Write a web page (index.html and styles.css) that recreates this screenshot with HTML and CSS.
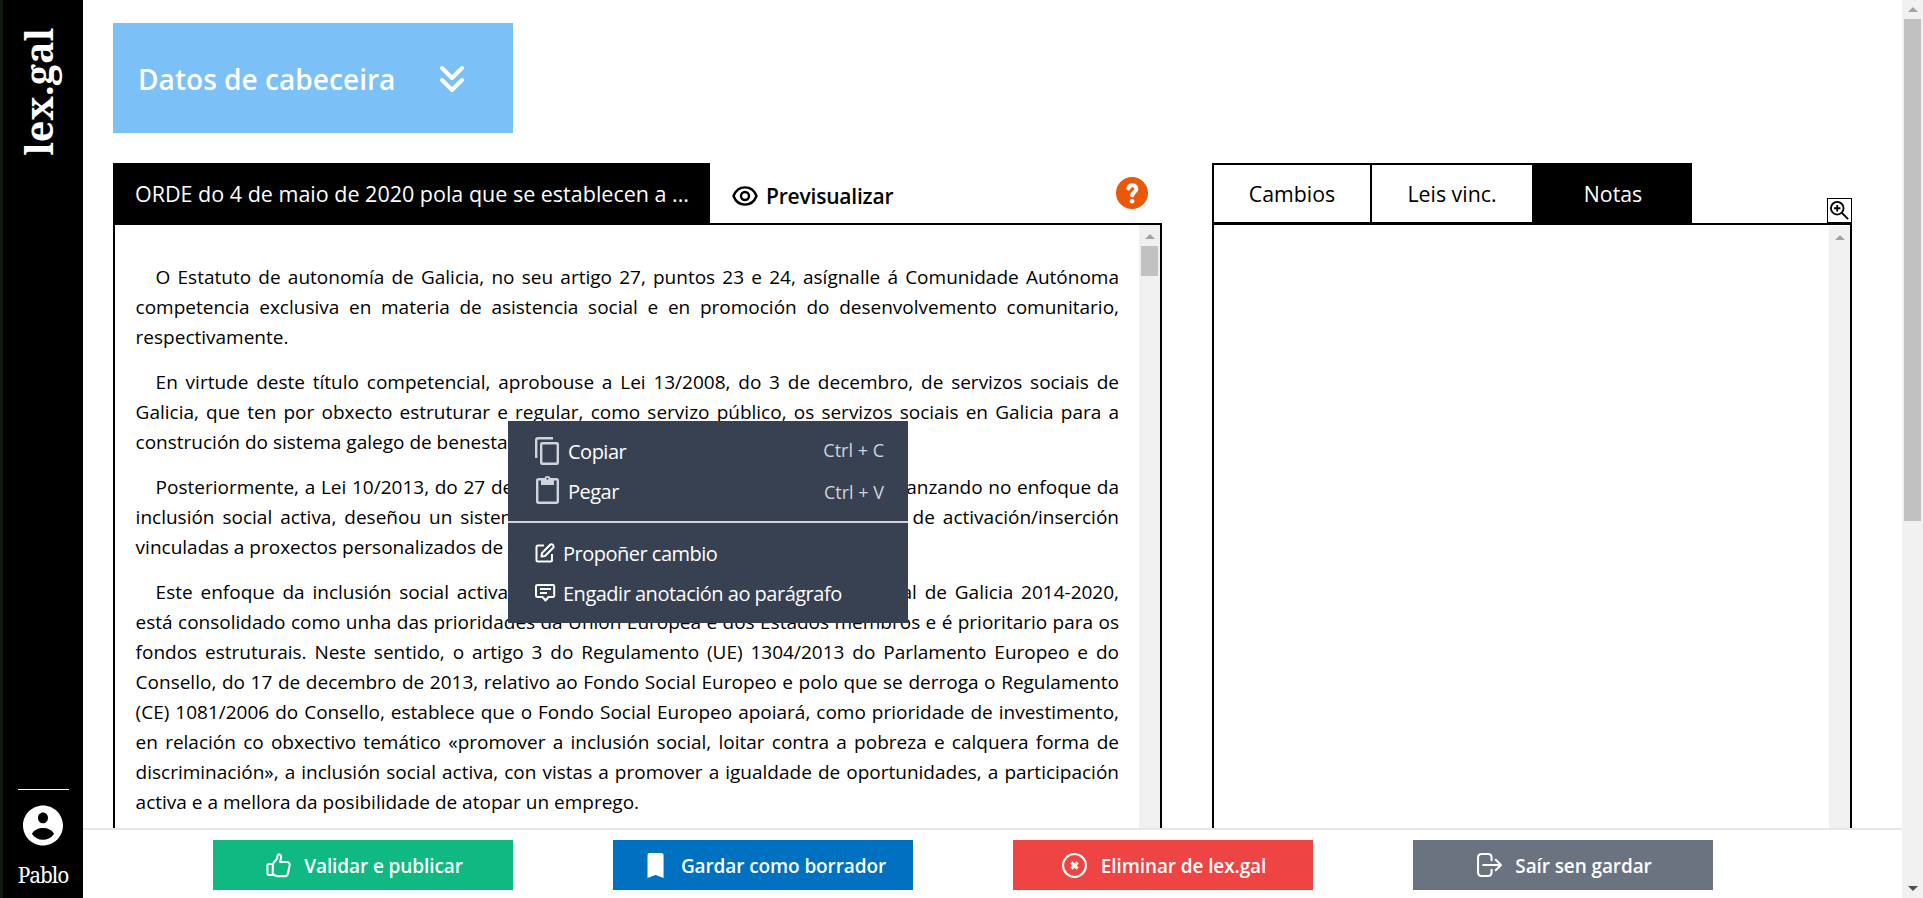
FILE: index.html
```
<!DOCTYPE html>
<html lang="gl">
<head>
<meta charset="utf-8">
<title>lex.gal</title>
<link rel="stylesheet" href="styles.css">
</head>
<body>
<div class="app">
  <aside class="side">
    <div class="logo">lex.gal</div>
    <div class="user">
      <svg class="avatar" viewBox="2 2 20 20"><path fill="#fff" d="M12 2C6.480 2 2 6.480 2 12s4.480 10 10 10 10-4.480 10-10S17.520 2 12 2zm0 3.500c1.400 0 2.500 1.200 2.500 2.700S13.400 10.900 12 10.900s-2.500-1.200-2.500-2.700S10.600 5.500 12 5.500zm0 13.600c-2.200 0-4.300-1-5.500-2.900.9-1.900 3.300-2.900 5.500-2.900s4.600 1 5.500 2.900c-1.200 1.900-3.300 2.900-5.500 2.900z"/></svg>
      <span class="name">Pablo</span>
    </div>
  </aside>
  <main class="main">
    <div class="content">
      <button class="header-data"><span class="header-label">Datos de cabeceira</span>
        <svg class="chev" viewBox="0 0 24 26" fill="none" stroke="#fff" stroke-width="4" stroke-linecap="round" stroke-linejoin="round"><path d="M2 2l10 10L22 2M2 14l10 10 10-10"/></svg>
      </button>
      <div class="columns">
        <section class="doc">
          <div class="tabs">
            <div class="doc-tab"><span class="doc-title">ORDE do 4 de maio de 2020 pola que se establecen a ...</span></div>
            <div class="preview">
              <svg class="eye" viewBox="0 0 26 20" fill="none" stroke="#000" stroke-width="2.400"><path d="M1.500 10C3.600 4.600 8 1.400 13 1.400S22.400 4.600 24.500 10C22.400 15.400 18 18.600 13 18.600S3.600 15.400 1.500 10z"/><circle cx="13" cy="10" r="4"/></svg>
              <span class="preview-label">Previsualizar</span>
            </div>
            <svg class="help" viewBox="0 0 32 32"><circle cx="16" cy="16" r="16" fill="#ea580c"/><path d="M12.300 11.400c.5-2 2-3.100 3.900-3.100 2.400 0 4.200 1.400 4.200 3.600 0 3.200-4.200 3.200-4.200 6.600" fill="none" stroke="#fff" stroke-width="4" stroke-linecap="round"/><circle cx="16.100" cy="24.200" r="2.300" fill="#fff"/></svg>
          </div>
          <div class="panel">
            <div class="text">
              <p><span class="l i">O Estatuto de autonomía de Galicia, no seu artigo 27, puntos 23 e 24, asígnalle á Comunidade Autónoma</span><span class="l">competencia exclusiva en materia de asistencia social e en promoción do desenvolvemento comunitario,</span><span class="l e">respectivamente.</span></p>
              <p><span class="l i">En virtude deste título competencial, aprobouse a Lei 13/2008, do 3 de decembro, de servizos sociais de</span><span class="l">Galicia, que ten por obxecto estruturar e regular, como servizo público, os servizos sociais en Galicia para a</span><span class="l e">construción do sistema galego de benestar.</span></p>
              <p><span class="l i">Posteriormente, a Lei 10/2013, do 27 de novembro, de inclusión social de Galicia, avanzando no enfoque da</span><span class="l">inclusión social activa, deseñou un sistema galego de prestacións sociais e medidas de activación/inserción</span><span class="l e">vinculadas a proxectos personalizados de cada persoa.</span></p>
              <p><span class="l i">Este enfoque da inclusión social activa, recollido nesa Estratexia de inclusión social de Galicia 2014-2020,</span><span class="l">está consolidado como unha das prioridades da Unión Europea e dos Estados membros e é prioritario para os</span><span class="l">fondos estruturais. Neste sentido, o artigo 3 do Regulamento (UE) 1304/2013 do Parlamento Europeo e do</span><span class="l">Consello, do 17 de decembro de 2013, relativo ao Fondo Social Europeo e polo que se derroga o Regulamento</span><span class="l">(CE) 1081/2006 do Consello, establece que o Fondo Social Europeo apoiará, como prioridade de investimento,</span><span class="l">en relación co obxectivo temático «promover a inclusión social, loitar contra a pobreza e calquera forma de</span><span class="l">discriminación», a inclusión social activa, con vistas a promover a igualdade de oportunidades, a participación</span><span class="l e">activa e a mellora da posibilidade de atopar un emprego.</span></p>
            </div>
            <div class="bar doc-bar"><i class="up"></i><i class="thumb"></i></div>
          </div>
        </section>
        <section class="notes">
          <div class="tabs">
            <div class="tab t1"><span>Cambios</span></div>
            <div class="tab t2"><span>Leis vinc.</span></div>
            <div class="tab t3"><span>Notas</span></div>
            <div class="zoom"><svg viewBox="1.500 1.500 21 21" fill="none" stroke="#000" stroke-width="2"><circle cx="9.500" cy="9.500" r="7"/><path d="M14.500 14.500l7 7M6 9.500h7M9.500 6v7"/></svg></div>
          </div>
          <div class="panel"><div class="bar notes-bar"><i class="up"></i></div></div>
        </section>
      </div>
    </div>
    <footer class="actions">
      <button class="btn green"><svg viewBox="0 0 24 24" fill="none" stroke="#fff" stroke-width="2" stroke-linejoin="round"><path d="M6.500 10.500l4-5c.4-1 .3-2.300.7-3.300.6-1.500 3.300-1 3.300 1.500 0 2-.7 3.200-1 5h6.500c1.800 0 3 1.300 2.700 3l-1.600 8c-.3 1.500-1.300 2.500-2.700 2.500h-7c-1.600 0-2.600-.5-4.900-2M6.500 10.500H3c-1 0-1.600.6-1.600 1.600v7.400c0 1 .6 1.600 1.600 1.600h3.500z"/></svg><span>Validar e publicar</span></button>
      <button class="btn blue"><svg viewBox="0 0 24 24"><path fill="#fff" d="M5.300 2q0-2 2-2h11.400q2 0 2 2v22L13 21l-7.700 3z"/></svg><span>Gardar como borrador</span></button>
      <button class="btn red"><svg viewBox="0 0 24 24" fill="none" stroke="#fff" stroke-width="2"><circle cx="12" cy="12" r="11"/><path stroke-width="3" d="M9 9l6 6m0-6l-6 6"/></svg><span>Eliminar de lex.gal</span></button>
      <button class="btn gray"><svg viewBox="0 0 24 24" fill="none" stroke="#fff" stroke-width="2" stroke-linecap="round" stroke-linejoin="round"><path d="M14 7V4.500q0-3.500-3.500-3.500h-6Q1 1 1 4.500v14Q1 22 4.500 22h6q3.500 0 3.500-3.500V16M6 11.500h17M18 6.500l5 5-5 5"/></svg><span>Saír sen gardar</span></button>
    </footer>
  </main>
  <div class="page-bar"><i class="up"></i><i class="thumb"></i><i class="down"></i></div>
</div>
<div class="menu">
  <div class="group top">
    <div class="item"><svg class="big" viewBox="0 0 24 28" fill="none" stroke="#d1d5db" stroke-width="2.400"><path d="M1.200 21V3q0-1.800 1.800-1.800h15"/><rect x="6.200" y="6.200" width="16.600" height="20.600" rx="1"/></svg><span>Copiar</span><kbd>Ctrl + C</kbd></div>
    <div class="item"><svg class="big" viewBox="0 0 24 28" fill="none" stroke="#d1d5db" stroke-width="2.400"><rect x="2.200" y="2.200" width="20.600" height="23.600" rx="1.500"/><path fill="#d1d5db" stroke="none" d="M6 2h3.500a3 3 0 0 1 6 0H19v6H6z"/><circle cx="12.500" cy="1.800" r="1" fill="#374151" stroke="none"/></svg><span>Pegar</span><kbd class="low">Ctrl + V</kbd></div>
  </div>
  <div class="group bottom">
    <div class="item"><svg class="sm" viewBox="0 0 20 20" fill="none" stroke="#fff" stroke-width="2" stroke-linejoin="round"><path d="M9 2.500H3q-1.500 0-1.500 1.500v13q0 1.500 1.500 1.500h12.500q1.500 0 1.500-1.500v-6M7 10l8.500-8.500q1.500-.5 2.500.7t.5 2.300L10 13l-3.500.5z"/></svg><span>Propoñer cambio</span></div>
    <div class="item"><svg class="sm" viewBox="0 0 20 20" fill="none" stroke="#fff" stroke-width="2" stroke-linejoin="round"><path d="M2.500 2h15.500q1.200 0 1.200 1.200v9.600q0 1.200-1.200 1.200h-4.500l-3 3.500-3-3.500h-5Q1 14 1 12.800V3.200Q1 2 2.500 2zM5 6h11M5 10h7"/></svg><span>Engadir anotación ao parágrafo</span></div>
  </div>
</div>
</body>
</html>
```
FILE: styles.css
```
* { box-sizing: border-box; }
body { margin: 0; height: 898px; overflow: hidden; background: #fff; color: #000; font-family: "Open Sans", "Noto Sans", sans-serif; font-size: 20px; }
button { border: 0; color: #fff; font-family: inherit; padding: 0; }
svg { display: block; flex: none; overflow: visible; }
span { white-space: nowrap; }
.app { display: flex; height: 898px; }
.side { width: 83px; background: #000; border-left: 3px solid #101c12; display: flex; flex-direction: column; justify-content: space-between; align-items: center; padding: 28px 0 9px; }
.logo { writing-mode: vertical-rl; transform: rotate(180deg); color: #fff; font: 700 37.8px/40px "Noto Serif", "Liberation Serif", serif; margin-right: 8px; }
.user { width: 51px; border-top: 1px solid #fff; display: flex; flex-direction: column; align-items: center; padding-top: 15px; }
.avatar { width: 40px; height: 41px; }
.name { color: #fff; font: 21px/28px "Noto Serif", "Liberation Serif", serif; letter-spacing: -1.1px; margin-top: 15px; }
.main { flex: 1; display: flex; flex-direction: column; }
.content { flex: 1; min-height: 0; padding: 23px 50px 0 30px; display: flex; flex-direction: column; gap: 30px; }
.header-data { width: 400px; height: 110px; background: #7bc0f7; display: flex; align-items: center; padding: 2px 49px 0 25px; justify-content: space-between; flex: none; }
.header-label { font-size: 28.1px; font-weight: 600; }
.chev { width: 24px; height: 26px; }
.columns { display: flex; justify-content: space-between; flex: 1; min-height: 0; }
.doc { width: 1049px; display: flex; flex-direction: column; }
.notes { width: 640px; display: flex; flex-direction: column; }
.tabs { display: flex; height: 60px; flex: none; }
.doc-tab { width: 597px; background: #000; color: #fff; padding-left: 22px; font-size: 21.5px; line-height: 61px; }
.preview { display: flex; align-items: center; gap: 8px; margin-left: 22px; padding-top: 5px; font-size: 21px; font-weight: 600; letter-spacing: -0.2px; }
.eye { width: 26px; height: 20px; }
.help { width: 32px; height: 32px; margin: 14px 14px 0 auto; }
.panel { flex: 1; min-height: 0; border: 2px solid #000; border-bottom: 0; display: flex; justify-content: flex-end; overflow: hidden; }
.text { flex: 1; padding: 37px 20px 0 20.6px; }
.text p { margin: 0 0 15px; }
.l { display: block; line-height: 30px; font-size: 19px; text-align: justify; text-align-last: justify; }
.i { padding-left: 20px; }
.e { text-align-last: left; }
.bar { background: #f0f0f0; display: flex; flex-direction: column; align-items: center; }
.doc-bar { width: 21px; }
.notes-bar { width: 21px; margin-top: 1px; }
.up { border: 5px solid transparent; border-top: 0; border-bottom: 5px solid #a3a3a3; margin-top: 9px; }
.down { border: 5px solid transparent; border-bottom: 0; border-top: 5px solid #505050; margin: auto 0 7px; }
.thumb { width: 17px; height: 30px; background: #c1c1c1; margin-top: 7px; }
.tab { border: 2px solid #000; border-bottom-width: 1px; font-size: 21.3px; line-height: 57px; text-align: center; }
.t1 { width: 160px; }
.t2 { width: 162px; border-left: 0; }
.t3 { width: 158px; background: #000; color: #fff; }
.zoom { width: 25px; height: 25px; border: 1px solid #000; margin: 35px 0 0 auto; padding: 2px; }
.zoom svg { width: 19px; height: 19px; }
.actions { height: 70px; border-top: 2px solid #e5e7eb; display: flex; padding: 10px 0 0 130px; gap: 100px; }
.btn { width: 300px; height: 50px; display: flex; align-items: center; justify-content: center; gap: 11px; font-size: 19px; font-weight: 600; letter-spacing: -0.1px; }
.btn svg { width: 25px; height: 25px; margin: 0 2.5px; }
.btn span { padding-top: 2px; }
.green { background: #10b981; }
.blue { background: #0070c0; }
.red { background: #ef4444; }
.gray { background: #6b7280; }
.page-bar { width: 21px; background: #f1f1f1; display: flex; flex-direction: column; align-items: center; }
.page-bar .up { margin-top: 7px; }
.page-bar .thumb { height: 502px; }
.menu { position: absolute; left: 508px; top: 421px; width: 400px; height: 202px; background: #374151; color: #fff; font-size: 20px; letter-spacing: -0.5px; }
.group { padding: 10px 24px 0 27px; display: grid; grid-auto-rows: 40px; }
.top { height: 102px; border-bottom: 2px solid #d1d5db; }
.item { display: flex; align-items: center; gap: 8px; }
.top .item { gap: 9px; }
.big { width: 24px; height: 28px; }
.sm { width: 20px; height: 20px; }
kbd { margin: -3px 0 0 auto; color: #d1d5db; font: 18px "Open Sans", sans-serif; letter-spacing: 0; }
.low { margin-top: 1px; }
```
